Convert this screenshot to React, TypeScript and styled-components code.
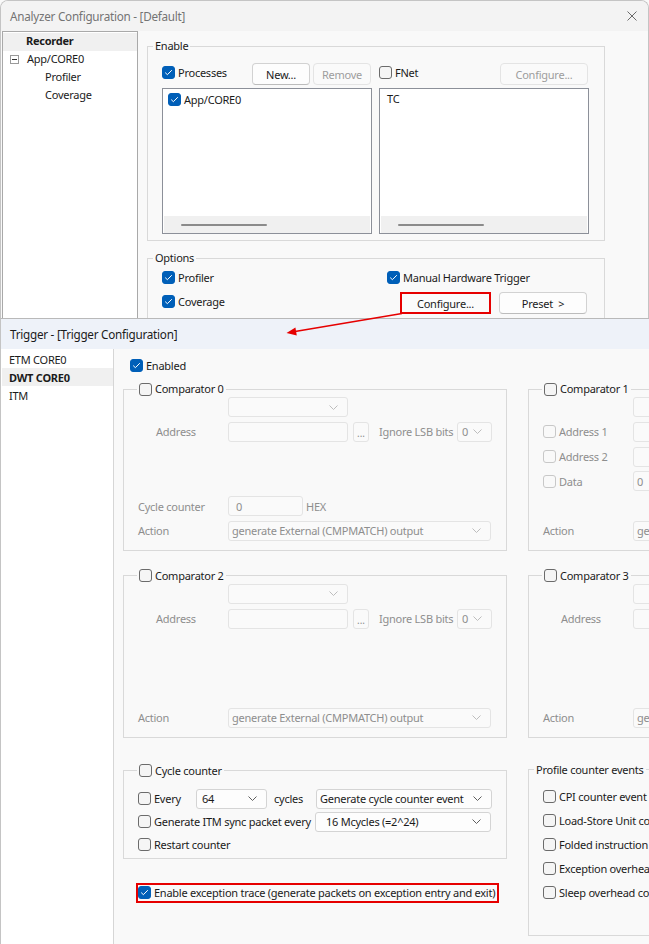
import React from "react";
import styled, { createGlobalStyle, css } from "styled-components";

const FONT = `"Noto Sans", "Segoe UI", "Liberation Sans", sans-serif`;

const GlobalStyle = createGlobalStyle`
  html, body { margin: 0; padding: 0; background: #f9f9f9; }
  body { font-family: ${FONT}; font-size: 11px; color: #1b1b1b; }
  * { box-sizing: border-box; }
`;

/* ---------- primitives ---------- */

const Screen = styled.div`
  position: relative;
  width: 649px;
  height: 944px;
  overflow: hidden;
  display: flex;
  flex-direction: column;
  background: #f9f9f9;
  font-family: ${FONT};
  font-size: 11px;
  letter-spacing: -0.25px;
`;

const AnalyzerWindow = styled.div`
  flex: none;
  height: 318px;
  display: flex;
  flex-direction: column;
  border: 1px solid #c4c4c4;
  border-bottom: none;
  border-radius: 8px 8px 0 0;
  overflow: hidden;
  background: #f9f9f9;
`;

const TriggerWindow = styled.div`
  flex: 1;
  min-height: 0;
  display: flex;
  flex-direction: column;
  border-top: 1px solid #b9b9b9;
  border-left: 1px solid #c4c4c4;
  background: #f9f9f9;
  overflow: hidden;
`;

const TitleBar = styled.div<{ $active?: boolean }>`
  flex: none;
  height: 30px;
  display: flex;
  align-items: center;
  justify-content: space-between;
  padding: 0 11px 0 9px;
  background: ${(p) => (p.$active ? "#eef2f9" : "#f3f3f3")};
  color: ${(p) => (p.$active ? "#1b1b1b" : "#747474")};
  font-size: 11.7px;
`;

const WindowBody = styled.div`
  flex: 1;
  min-height: 0;
  display: flex;
  align-items: stretch;
`;

const CloseIcon = () => (
  <svg width="10" height="10" viewBox="0 0 10 10">
    <path d="M0.5 0.5 L9.5 9.5 M9.5 0.5 L0.5 9.5" stroke="#6a6a6a" strokeWidth="1" fill="none" />
  </svg>
);

/* tree */
const Tree = styled.div`
  width: 136px;
  flex: none;
  margin-left: 1px;
  background: #ffffff;
  border: 1px solid #a9a9a9;
  border-bottom: none;
  padding-top: 1px;
`;

const TreeRow = styled.div<{ $indent: number; $selected?: boolean; $bold?: boolean }>`
  height: 18px;
  display: flex;
  align-items: center;
  gap: 8px;
  padding-left: ${(p) => p.$indent}px;
  padding-bottom: 3px;
  background: ${(p) => (p.$selected ? "#f0f0f0" : "transparent")};
  font-weight: ${(p) => (p.$bold ? 700 : 400)};
  color: #1b1b1b;
  white-space: nowrap;
`;

const Expander = styled.span`
  width: 9px;
  height: 9px;
  flex: none;
  margin-top: 2px;
  border: 1px solid #9a9a9a;
  background: #fff;
  display: inline-flex;
  align-items: center;
  justify-content: center;
  &::after {
    content: "";
    width: 5px;
    height: 1px;
    background: #333;
  }
`;

const SideList = styled.div`
  width: 113px;
  flex: none;
  background: #ffffff;
  border-right: 1px solid #d6d6d6;
  padding-top: 1px;
`;

const SideRow = styled.div<{ $selected?: boolean }>`
  height: 18px;
  display: flex;
  align-items: center;
  padding-left: 7px;
  margin-left: 1px;
  background: ${(p) => (p.$selected ? "#f0f0f0" : "transparent")};
  font-weight: ${(p) => (p.$selected ? 700 : 400)};
  white-space: nowrap;
`;

/* group box */
const Group = styled.fieldset<{ $w: number }>`
  width: ${(p) => p.$w}px;
  margin: 0;
  padding: 0;
  min-width: 0;
  border: 1px solid #d9d9d9;
  flex: none;
`;

const Legend = styled.legend<{ $ml: number }>`
  margin-left: ${(p) => p.$ml}px;
  padding: 0 2px;
  height: 16px;
  line-height: 16px;
  color: #1b1b1b;
  white-space: nowrap;
`;

/* checkbox */
const Box = styled.span<{ $checked?: boolean; $disabled?: boolean }>`
  width: 13px;
  height: 13px;
  flex: none;
  border-radius: 3px;
  display: inline-flex;
  align-items: center;
  justify-content: center;
  ${(p) =>
    p.$checked
      ? css`
          background: #005fb8;
          border: 1px solid #005fb8;
        `
      : css`
          background: ${p.$disabled ? "#f9f9f9" : "#f5f5f5"};
          border: 1px solid ${p.$disabled ? "#c8c8c8" : "#6b6b6b"};
        `}
`;

const CheckWrap = styled.span<{ $disabled?: boolean }>`
  display: inline-flex;
  align-items: center;
  gap: 3px;
  height: 16px;
  white-space: nowrap;
  color: ${(p) => (p.$disabled ? "#8e8e8e" : "#1b1b1b")};
  vertical-align: top;
`;

const Check: React.FC<{ checked?: boolean; disabled?: boolean; children?: React.ReactNode }> = ({
  checked,
  disabled,
  children,
}) => (
  <CheckWrap $disabled={disabled}>
    <Box $checked={checked} $disabled={disabled}>
      {checked && (
        <svg width="9" height="7" viewBox="0 0 9 7">
          <path d="M1.2 3.6 L3.4 5.7 L7.8 1.2" stroke="#ffffff" strokeWidth="1" fill="none" />
        </svg>
      )}
    </Box>
    {children}
  </CheckWrap>
);

/* buttons */
const Button = styled.button<{ $w: number; $disabled?: boolean; $hl?: boolean }>`
  width: ${(p) => p.$w}px;
  height: 22px;
  flex: none;
  padding: 0;
  font: inherit;
  letter-spacing: inherit;
  border-radius: 4px;
  background: #fdfdfd;
  border: 1px solid #d2d2d2;
  border-bottom-color: #bcbcbc;
  color: #1b1b1b;
  ${(p) =>
    p.$disabled &&
    css`
      background: #fafafa;
      border: 1px solid #e4e4e4;
      color: #9d9d9d;
    `}
  ${(p) =>
    p.$hl &&
    css`
      border: 2px solid #e60000;
      border-radius: 0;
      background: #fbfbfb;
    `}
`;

/* inputs */
const Field = styled.div<{ $w: number; $disabled?: boolean; $pl?: number }>`
  width: ${(p) => p.$w}px;
  height: 20px;
  flex: none;
  display: flex;
  align-items: center;
  justify-content: space-between;
  padding: 0 9px 0 ${(p) => p.$pl ?? 3}px;
  border-radius: 3px;
  white-space: nowrap;
  overflow: hidden;
  border: 1px solid ${(p) => (p.$disabled ? "#e4e4e4" : "#d4d4d4")};
  background: ${(p) => (p.$disabled ? "#fafafa" : "#fdfdfd")};
  color: ${(p) => (p.$disabled ? "#8e8e8e" : "#1b1b1b")};
`;

const Chevron: React.FC<{ disabled?: boolean }> = ({ disabled }) => (
  <svg width="9" height="5" viewBox="0 0 9 5" style={{ flex: "none" }}>
    <path d="M0.5 0.5 L4.5 4.5 L8.5 0.5" stroke={disabled ? "#bdbdbd" : "#5f5f5f"} strokeWidth="1" fill="none" />
  </svg>
);

const Combo: React.FC<{ w: number; disabled?: boolean; pl?: number; children?: React.ReactNode }> = ({
  w,
  disabled,
  pl,
  children,
}) => (
  <Field $w={w} $disabled={disabled} $pl={pl}>
    <span>{children}</span>
    <Chevron disabled={disabled} />
  </Field>
);

const DotsButton = styled.div`
  width: 16px;
  height: 20px;
  flex: none;
  margin-left: 5px;
  border: 1px solid #e4e4e4;
  border-radius: 3px;
  background: #fafafa;
  color: #8e8e8e;
  display: flex;
  align-items: flex-end;
  justify-content: center;
  padding-bottom: 3px;
  font-size: 10px;
  line-height: 10px;
  letter-spacing: 0;
`;

const MutedText = styled.span<{ $w?: number; $pl?: number }>`
  color: #8e8e8e;
  white-space: nowrap;
  ${(p) => (p.$w ? `width: ${p.$w}px; flex: none;` : "")}
  padding-left: ${(p) => p.$pl ?? 0}px;
`;

const PlainText = styled.span`
  white-space: nowrap;
`;

/* ---------- Analyzer window parts ---------- */

const ConfigPane = styled.div`
  flex: 1;
  min-width: 0;
  padding: 7px 0 0 9px;
  display: flex;
  flex-direction: column;
  gap: 9px;
`;

const EnableBody = styled.div`
  display: flex;
  gap: 7px;
  padding: 9px 15px 6px 14px;
`;

const ListColumn = styled.div`
  width: 210px;
  display: flex;
  flex-direction: column;
  gap: 3px;
`;

const ListHeader = styled.div`
  height: 22px;
  display: flex;
  align-items: flex-start;
  justify-content: space-between;
`;

const HeaderCheck = styled.div`
  padding-top: 1px;
`;

const ButtonRow = styled.div`
  display: flex;
  gap: 3px;
  margin-right: 1px;
`;

const ListBox = styled.div`
  height: 146px;
  background: #ffffff;
  border: 1px solid #8c9099;
  display: flex;
  flex-direction: column;
`;

const ListBody = styled.div<{ $pl: number }>`
  flex: 1;
  padding: 2px 0 0 ${(p) => p.$pl}px;
`;

const HScroll = styled.div`
  height: 17px;
  margin: 0 1px;
  background: #f0f0f0;
  display: flex;
  align-items: center;
  padding-left: 17px;
`;

const Thumb = styled.div`
  width: 86px;
  height: 2px;
  border-radius: 1px;
  background: #8b8b8b;
`;

const OptionsGrid = styled.div`
  display: grid;
  grid-template-columns: 225px 201px;
  grid-auto-rows: 22px;
  row-gap: 2px;
  padding: 0 15px 4px 14px;
  align-items: center;
`;

const OptionButtons = styled.div`
  display: flex;
  justify-content: flex-end;
  gap: 8px;
  padding-right: 1px;
  margin-top: 4px;
`;

/* ---------- Trigger window parts ---------- */

const TriggerMain = styled.div`
  flex: 1;
  min-width: 0;
  overflow: hidden;
  padding: 8px 0 0 9px;
`;

const EnabledRow = styled.div`
  padding-left: 7px;
  height: 16px;
  display: flex;
  align-items: center;
`;

const DwtGrid = styled.div`
  margin-top: 8px;
  display: grid;
  grid-template-columns: 384px 384px;
  column-gap: 21px;
  row-gap: 17px;
  width: 789px;
`;

const CmpBody = styled.div`
  display: grid;
  grid-template-columns: 90px 1fr;
  grid-template-rows: repeat(6, 20px);
  row-gap: 4.8px;
  padding: 0 0 9px 14px;
  align-items: center;
`;

const Cell = styled.div<{ $col?: number; $row: number }>`
  grid-row: ${(p) => p.$row};
  grid-column: ${(p) => p.$col ?? 2};
  display: flex;
  align-items: center;
  height: 20px;
  min-width: 0;
`;

const ThirdRow = styled.div`
  margin-top: 8px;
  display: flex;
  flex-direction: column;
`;

const ProfileWrap = styled.div`
  margin-top: 7px;
`;

const CycleBody = styled.div`
  display: flex;
  flex-direction: column;
  gap: 3px;
  padding: 10px 0 3px 14px;
`;

const Line = styled.div`
  height: 20px;
  display: flex;
  align-items: center;
`;

const LineCell = styled.div<{ $w: number; $pl?: number }>`
  width: ${(p) => p.$w}px;
  flex: none;
  display: flex;
  align-items: center;
  padding-left: ${(p) => p.$pl ?? 0}px;
  white-space: nowrap;
`;

const RedBox = styled.div`
  margin: 24px 0 0 13px;
  align-self: flex-start;
  height: 20px;
  display: flex;
  align-items: center;
  border: 2px solid #e60000;
  padding: 0 2px 0 0;
`;

const ProfileBody = styled.div`
  display: flex;
  flex-direction: column;
  gap: 4px;
  padding: 9px 0 32px 14px;
`;

const ArrowLayer = styled.svg`
  position: absolute;
  left: 0;
  top: 0;
  pointer-events: none;
`;

/* ---------- comparator ---------- */

const CheckLegend: React.FC<{ children: React.ReactNode }> = ({ children }) => (
  <Legend $ml={13}>
    <Check>{children}</Check>
  </Legend>
);

const ComparatorA: React.FC<{ n: number; cycle?: boolean }> = ({ n, cycle }) => (
  <Group $w={384}>
    <CheckLegend>Comparator {n}</CheckLegend>
    <CmpBody>
      <Cell $row={1}>
        <Combo w={120} disabled />
      </Cell>
      <Cell $row={2} $col={1}>
        <MutedText $pl={18}>Address</MutedText>
      </Cell>
      <Cell $row={2}>
        <Field $w={120} $disabled />
        <DotsButton>...</DotsButton>
        <MutedText $w={88} $pl={10}>
          Ignore LSB bits
        </MutedText>
        <Combo w={35} disabled pl={4}>
          0
        </Combo>
      </Cell>
      {cycle && (
        <>
          <Cell $row={5} $col={1}>
            <MutedText>Cycle counter</MutedText>
          </Cell>
          <Cell $row={5}>
            <Field $w={75} $disabled $pl={7}>
              0
            </Field>
            <MutedText $pl={3}>HEX</MutedText>
          </Cell>
        </>
      )}
      <Cell $row={6} $col={1}>
        <MutedText>Action</MutedText>
      </Cell>
      <Cell $row={6}>
        <Combo w={263} disabled>
          generate External (CMPMATCH) output
        </Combo>
      </Cell>
    </CmpBody>
  </Group>
);

const ComparatorB: React.FC<{ n: number; data?: boolean }> = ({ n, data }) => (
  <Group $w={384}>
    <CheckLegend>Comparator {n}</CheckLegend>
    <CmpBody>
      <Cell $row={1}>
        <Combo w={120} disabled />
      </Cell>
      {data ? (
        <>
          <Cell $row={2} $col={1}>
            <Check disabled>Address 1</Check>
          </Cell>
          <Cell $row={2}>
            <Field $w={120} $disabled />
          </Cell>
          <Cell $row={3} $col={1}>
            <Check disabled>Address 2</Check>
          </Cell>
          <Cell $row={3}>
            <Field $w={120} $disabled />
          </Cell>
          <Cell $row={4} $col={1}>
            <Check disabled>Data</Check>
          </Cell>
          <Cell $row={4}>
            <Field $w={120} $disabled>
              0
            </Field>
          </Cell>
        </>
      ) : (
        <>
          <Cell $row={2} $col={1}>
            <MutedText $pl={18}>Address</MutedText>
          </Cell>
          <Cell $row={2}>
            <Field $w={120} $disabled />
          </Cell>
        </>
      )}
      <Cell $row={6} $col={1}>
        <MutedText>Action</MutedText>
      </Cell>
      <Cell $row={6}>
        <Combo w={263} disabled>
          generate External (CMPMATCH) output
        </Combo>
      </Cell>
    </CmpBody>
  </Group>
);

/* ---------- App ---------- */

export default function App() {
  return (
    <Screen>
      <GlobalStyle />
      <AnalyzerWindow>
        <TitleBar>
          <span>Analyzer Configuration - [Default]</span>
          <CloseIcon />
        </TitleBar>
        <WindowBody>
          <Tree>
            <TreeRow $indent={23} $selected $bold>
              Recorder
            </TreeRow>
            <TreeRow $indent={7}>
              <Expander />
              App/CORE0
            </TreeRow>
            <TreeRow $indent={42}>Profiler</TreeRow>
            <TreeRow $indent={42}>Coverage</TreeRow>
          </Tree>
          <ConfigPane>
            <Group $w={458}>
              <Legend $ml={5}>Enable</Legend>
              <EnableBody>
                <ListColumn>
                  <ListHeader>
                    <HeaderCheck>
                      <Check checked>Processes</Check>
                    </HeaderCheck>
                    <ButtonRow>
                      <Button $w={58}>New...</Button>
                      <Button $w={58} $disabled>
                        Remove
                      </Button>
                    </ButtonRow>
                  </ListHeader>
                  <ListBox>
                    <ListBody $pl={5}>
                      <Check checked>App/CORE0</Check>
                    </ListBody>
                    <HScroll>
                      <Thumb />
                    </HScroll>
                  </ListBox>
                </ListColumn>
                <ListColumn>
                  <ListHeader>
                    <HeaderCheck>
                      <Check>FNet</Check>
                    </HeaderCheck>
                    <ButtonRow>
                      <Button $w={88} $disabled>
                        Configure...
                      </Button>
                    </ButtonRow>
                  </ListHeader>
                  <ListBox>
                    <ListBody $pl={7}>
                      <PlainText>TC</PlainText>
                    </ListBody>
                    <HScroll>
                      <Thumb />
                    </HScroll>
                  </ListBox>
                </ListColumn>
              </EnableBody>
            </Group>
            <Group $w={458}>
              <Legend $ml={5}>Options</Legend>
              <OptionsGrid>
                <Check checked>Profiler</Check>
                <Check checked>Manual Hardware Trigger</Check>
                <Check checked>Coverage</Check>
                <OptionButtons>
                  <Button $w={91} $hl>
                    Configure...
                  </Button>
                  <Button $w={88}>Preset &nbsp;&gt;</Button>
                </OptionButtons>
                <Check />
              </OptionsGrid>
            </Group>
          </ConfigPane>
        </WindowBody>
      </AnalyzerWindow>

      <TriggerWindow>
        <TitleBar $active>
          <span>Trigger - [Trigger Configuration]</span>
        </TitleBar>
        <WindowBody>
          <SideList>
            <SideRow>ETM CORE0</SideRow>
            <SideRow $selected>DWT CORE0</SideRow>
            <SideRow>ITM</SideRow>
          </SideList>
          <TriggerMain>
            <EnabledRow>
              <Check checked>Enabled</Check>
            </EnabledRow>
            <DwtGrid>
              <ComparatorA n={0} cycle />
              <ComparatorB n={1} data />
              <ComparatorA n={2} />
              <ComparatorB n={3} />
              <ThirdRow>
                <Group $w={384}>
                  <CheckLegend>Cycle counter</CheckLegend>
                  <CycleBody>
                    <Line>
                      <LineCell $w={58}>
                        <Check>Every</Check>
                      </LineCell>
                      <Combo w={71} pl={5}>
                        64
                      </Combo>
                      <LineCell $w={49} $pl={7}>
                        cycles
                      </LineCell>
                      <Combo w={176} pl={3}>
                        Generate cycle counter event
                      </Combo>
                    </Line>
                    <Line>
                      <LineCell $w={177}>
                        <Check>Generate ITM sync packet every</Check>
                      </LineCell>
                      <Combo w={176} pl={10}>
                        16 Mcycles (=2^24)
                      </Combo>
                    </Line>
                    <Line>
                      <Check>Restart counter</Check>
                    </Line>
                  </CycleBody>
                </Group>
                <RedBox>
                  <Check checked>Enable exception trace (generate packets on exception entry and exit)</Check>
                </RedBox>
              </ThirdRow>
              <ProfileWrap>
                <Group $w={384}>
                  <Legend $ml={5}>Profile counter events</Legend>
                  <ProfileBody>
                    <Line>
                      <Check>CPI counter event</Check>
                    </Line>
                    <Line>
                      <Check>Load-Store Unit counter event</Check>
                    </Line>
                    <Line>
                      <Check>Folded instruction counter event</Check>
                    </Line>
                    <Line>
                      <Check>Exception overhead counter event</Check>
                    </Line>
                    <Line>
                      <Check>Sleep overhead counter event</Check>
                    </Line>
                  </ProfileBody>
                </Group>
              </ProfileWrap>
            </DwtGrid>
          </TriggerMain>
        </WindowBody>
      </TriggerWindow>

      <ArrowLayer width="649" height="944" viewBox="0 0 649 944">
        <line x1="402" y1="313.5" x2="295" y2="331.5" stroke="#e60000" strokeWidth="1.6" />
        <polygon points="286.5,333 295.4,327.6 296.8,335.4" fill="#e60000" />
      </ArrowLayer>
    </Screen>
  );
}
